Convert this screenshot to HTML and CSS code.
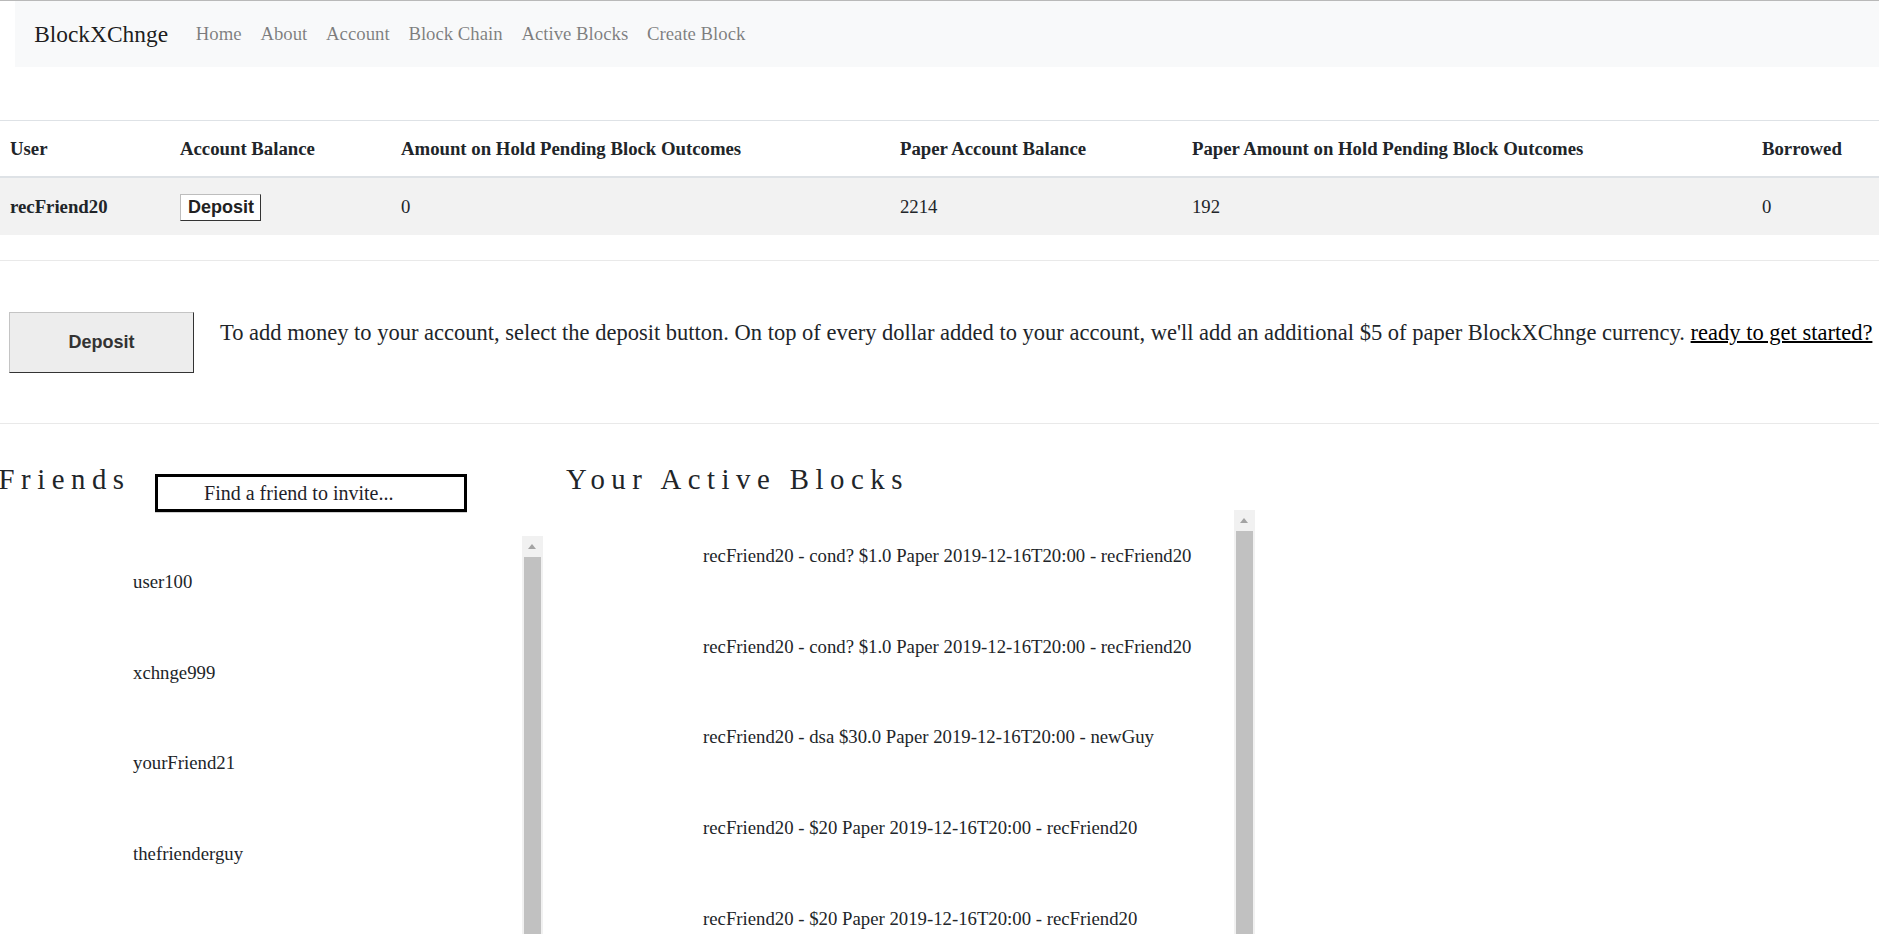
FILE: index.html
```html
<!DOCTYPE html>
<html lang="en">
<head>
<meta charset="utf-8">
<title>BlockXChnge - Account</title>
<link rel="stylesheet" href="styles.css">
</head>
<body>
<div class="page">
  <nav class="navbar">
    <a class="brand" href="#">BlockXChnge</a>
    <ul class="nav">
      <li><a href="#">Home</a></li>
      <li><a href="#">About</a></li>
      <li><a href="#">Account</a></li>
      <li><a href="#">Block Chain</a></li>
      <li><a href="#">Active Blocks</a></li>
      <li><a href="#">Create Block</a></li>
    </ul>
  </nav>

  <table class="account">
    <colgroup>
      <col class="c1"><col class="c2"><col class="c3"><col class="c4"><col class="c5"><col class="c6">
    </colgroup>
    <thead>
      <tr>
        <th>User</th>
        <th>Account Balance</th>
        <th>Amount on Hold Pending Block Outcomes</th>
        <th>Paper Account Balance</th>
        <th>Paper Amount on Hold Pending Block Outcomes</th>
        <th>Borrowed</th>
      </tr>
    </thead>
    <tbody>
      <tr>
        <th>recFriend20</th>
        <td><button class="btn-small">Deposit</button></td>
        <td>0</td>
        <td>2214</td>
        <td>192</td>
        <td>0</td>
      </tr>
    </tbody>
  </table>

  <hr class="rule rule-first">

  <section class="deposit">
    <button class="btn-big">Deposit</button>
    <p class="deposit-text">To add money to your account, select the deposit button. On top of every dollar added to your account, we'll add an additional $5 of paper BlockXChnge currency. <a href="#">ready to get started?</a></p>
  </section>

  <hr class="rule">

  <section class="lists">
    <div class="col col-friends">
      <div class="col-head">
        <h3 class="title title-friends">Friends</h3>
        <input class="finder" type="text" placeholder="Find a friend to invite...">
      </div>
      <div class="scrollbox box-friends">
        <ul class="items items-friends">
          <li>user100</li>
          <li>xchnge999</li>
          <li>yourFriend21</li>
          <li>thefrienderguy</li>
          <li>newGuy</li>
        </ul>
        <div class="scrollbar"><div class="sb-up"></div><div class="sb-thumb"></div></div>
      </div>
    </div>
    <div class="col col-blocks">
      <h3 class="title title-blocks">Your Active Blocks</h3>
      <div class="scrollbox box-blocks">
        <ul class="items items-blocks">
          <li>recFriend20 - cond? $1.0 Paper 2019-12-16T20:00 - recFriend20</li>
          <li>recFriend20 - cond? $1.0 Paper 2019-12-16T20:00 - recFriend20</li>
          <li>recFriend20 - dsa $30.0 Paper 2019-12-16T20:00 - newGuy</li>
          <li>recFriend20 - $20 Paper 2019-12-16T20:00 - recFriend20</li>
          <li>recFriend20 - $20 Paper 2019-12-16T20:00 - recFriend20</li>
          <li>recFriend20 - $20 Paper 2019-12-16T20:00 - recFriend20</li>
        </ul>
        <div class="scrollbar"><div class="sb-up"></div><div class="sb-thumb"></div></div>
      </div>
    </div>
  </section>
</div>
</body>
</html>
```

FILE: styles.css
```css
* { box-sizing: border-box; }

html, body {
  margin: 0;
  padding: 0;
  background: #ffffff;
}

body {
  font-family: "Liberation Serif", "Times New Roman", serif;
  font-size: 18.75px;
  line-height: 1.5;
  color: #212529;
  overflow: hidden;
}

.page {
  border-top: 1px solid #b9b9b9;
}

/* ---------- navbar ---------- */
.navbar {
  margin-left: 15px;
  display: flex;
  align-items: center;
  padding: 9.6px 19.2px;
  background: #f8f9fa;
  height: 66px;
}

.brand {
  font-size: 23.4px;
  line-height: 36px;
  padding: 6px 0;
  margin-right: 18.4px;
  color: rgba(0, 0, 0, 0.9);
  text-decoration: none;
  white-space: nowrap;
}

.nav {
  display: flex;
  list-style: none;
  margin: 0;
  padding: 0;
}

.nav a {
  display: block;
  padding: 9.6px 9.4px;
  line-height: 28.8px;
  color: rgba(0, 0, 0, 0.5);
  text-decoration: none;
  white-space: nowrap;
}

/* ---------- account table ---------- */
.account {
  width: 100%;
  table-layout: fixed;
  border-collapse: collapse;
  margin-top: 53px;
}

.account .c1 { width: 165.6px; }
.account .c2 { width: 221px; }
.account .c3 { width: 499px; }
.account .c4 { width: 292px; }
.account .c5 { width: 570px; }

.account th,
.account td {
  text-align: left;
  vertical-align: middle;
  padding: 15px 14.4px 13px;
  line-height: 28.8px;
  white-space: nowrap;
}

.account thead th {
  font-weight: bold;
  padding-top: 14px;
  padding-bottom: 12px;
  border-top: 1px solid #dee2e6;
  border-bottom: 2px solid #dee2e6;
}

.account th:first-child {
  padding-left: 10px;
}

.account tbody tr {
  background: #f2f2f2;
}

.account tbody th {
  font-weight: bold;
}

.btn-small {
  font-family: "Liberation Sans", Arial, sans-serif;
  font-weight: bold;
  font-size: 18px;
  line-height: 21px;
  color: #222;
  background: #ffffff;
  padding: 2px 6px 2px 7px;
  height: 27px;
  width: 81px;
  border: 1px solid #bdbdbd;
  border-right-color: #333;
  border-bottom-color: #333;
  border-radius: 0;
  vertical-align: middle;
  position: relative;
  top: -1px;
}

/* ---------- rules ---------- */
.rule {
  margin: 0;
  border: 0;
  border-top: 1px solid #e9e9e9;
  height: 0;
}

.rule-first {
  margin-top: 25px;
}

/* ---------- deposit section ---------- */
.deposit {
  display: flex;
  align-items: flex-start;
  padding: 51px 0 50px 9px;
}

.btn-big {
  flex: none;
  width: 185px;
  height: 61px;
  font-family: "Liberation Sans", Arial, sans-serif;
  font-weight: bold;
  font-size: 18px;
  color: #333;
  background: #ededed;
  border: 1px solid #c4c4c4;
  border-right-color: #333;
  border-bottom-color: #333;
  border-radius: 0;
  padding: 0;
}

.deposit-text {
  margin: 7px 0 0 26px;
  font-size: 22.5px;
  line-height: 28.8px;
  white-space: nowrap;
}

.deposit-text a {
  color: #000;
  text-decoration: underline;
  text-decoration-thickness: 2px;
}

/* ---------- lists section ---------- */
.lists {
  display: flex;
  align-items: flex-start;
  padding-top: 34px;
}

.col {
  display: flex;
  flex-direction: column;
}

.col-friends { width: 543px; flex: none; }
.col-blocks { width: 712px; flex: none; }

.col-head {
  display: flex;
  align-items: flex-start;
}

.title {
  margin: 4px 0 0;
  font-size: 28.8px;
  line-height: 34.56px;
  font-weight: normal;
  letter-spacing: 6.5px;
  white-space: nowrap;
}

.title-friends { margin-left: -1.4px; }
.title-blocks { margin-left: 23px; }

.finder {
  margin: 16px 0 0 24.5px;
  width: 312px;
  height: 38px;
  border: 3px solid #000;
  padding: 0 0 0 46px;
  font-family: "Liberation Serif", "Times New Roman", serif;
  font-size: 20px;
  color: #222;
  background: #fff;
  box-shadow: 0 1px 0 #d0d0d0;
  outline: none;
}

.finder::placeholder {
  color: #1f1f2a;
  opacity: 1;
}

.scrollbox {
  display: flex;
  height: 520px;
  overflow: hidden;
}

.box-friends { margin-top: 24px; }
.box-blocks { margin-top: 13.5px; }

.items {
  flex: 1;
  list-style: none;
  margin: 0;
  padding: 1px 0 0;
  overflow: hidden;
}

.items li {
  padding: 30.9px 0 31px;
  line-height: 28.8px;
  white-space: nowrap;
}

.items-friends { padding-left: 133px; }
.items-blocks { padding-left: 160px; }

.scrollbar {
  flex: none;
  width: 21px;
  background: #f1f1f1;
  display: flex;
  flex-direction: column;
}

.sb-up {
  height: 21px;
  flex: none;
  position: relative;
}

.sb-up::after {
  content: "";
  position: absolute;
  left: 6px;
  top: 8px;
  border-left: 4.5px solid transparent;
  border-right: 4.5px solid transparent;
  border-bottom: 5px solid #a3a3a3;
}

.sb-thumb {
  flex: 1;
  margin: 0 2px;
  background: #c1c1c1;
}
```
